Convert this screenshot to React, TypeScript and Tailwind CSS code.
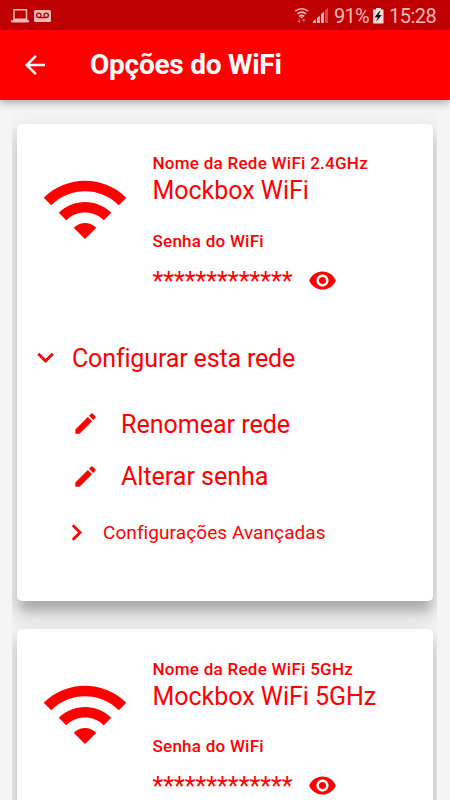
import React from "react";

type IconProps = { d: string; className: string };

function Icon({ d, className }: IconProps) {
  return (
    <svg viewBox="0 0 24 24" fill="currentColor" className={`block shrink-0 ${className}`} aria-hidden="true">
      <path d={d} />
    </svg>
  );
}

const paths = {
  back: "M20 11H7.83l5.59-5.59L12 4l-8 8 8 8 1.41-1.41L7.83 13H20v-2z",
  wifi: "M1 9l2 2c4.97-4.97 13.03-4.97 18 0l2-2C16.93 2.93 7.08 2.93 1 9zm8 8l3 3 3-3c-1.65-1.66-4.34-1.66-6 0zm-4-4l2 2c2.76-2.76 7.24-2.76 10 0l2-2C15.14 9.14 8.87 9.14 5 13z",
  eye: "M12 4.5C7 4.5 2.73 7.61 1 12c1.73 4.39 6 7.5 11 7.5s9.27-3.11 11-7.5c-1.73-4.39-6-7.5-11-7.5zM12 17c-2.76 0-5-2.24-5-5s2.24-5 5-5 5 2.24 5 5-2.24 5-5 5zm0-8c-1.66 0-3 1.34-3 3s1.34 3 3 3 3-1.34 3-3-1.34-3-3-3z",
  pencil: "M3 17.25V21h3.75L17.81 9.94l-3.75-3.75L3 17.25zM20.71 7.04c.39-.39.39-1.02 0-1.41l-2.34-2.34c-.39-.39-1.02-.39-1.41 0l-1.83 1.83 3.75 3.75 1.83-1.83z",
  down: "M7.41 8.59L12 13.17l4.59-4.58L18 10l-6 6-6-6 1.41-1.41z",
  right: "M8.59 16.59L13.17 12 8.59 7.41 10 6l6 6-6 6-1.41-1.41z",
};

function StatusBar() {
  return (
    <div className="flex h-[30px] shrink-0 items-center bg-[#be0000] text-[#f0b9b9]">
      <svg width="60" height="30" viewBox="0 0 60 30" className="block" aria-hidden="true">
        <path d="M14 9.700h12.500v9.500H14z" fill="none" stroke="currentColor" strokeWidth="1.5" />
        <path d="M11 20h18v1.400l-1 1H12l-1-1z" fill="currentColor" />
        <rect x="34" y="10" width="17" height="12" rx="1.5" fill="currentColor" />
        <g fill="none" stroke="#be0000" strokeWidth="1.3">
          <circle cx="38.800" cy="15.300" r="2.200" />
          <circle cx="46.200" cy="15.300" r="2.200" />
          <path d="M38.800 17.600h7.400" />
        </g>
      </svg>
      <svg width="42" height="30" viewBox="290 0 42 30" className="ml-[230px] block" aria-hidden="true">
        <g fill="none" stroke="currentColor" strokeWidth="1.6">
          <path d="M295.300 11.200q6.400-5 12.800 0M297.300 13.900q4.400-3.600 8.800 0M299.200 16.400q2.500-2.200 5 0" />
        </g>
        <path d="M300 16.800h3.400l-1.700 2z" fill="currentColor" />
        <path d="M299.200 18.500v3.500M297.700 20.600l1.500 1.600 1.500-1.600M303.800 22.500V19M302.300 20.600l1.500-1.600 1.500 1.600" fill="none" stroke="currentColor" strokeWidth=".9" opacity=".65" />
        <path d="M313 23v-1.600l2.900-2.400V23zM317 23v-5l2.900-2.600V23zM321 23v-8.800l2.900-2.700V23z" fill="currentColor" />
        <path d="M325 23V10.500l3-2.400V23z" fill="currentColor" opacity=".4" />
      </svg>
      <span className="ml-[2px] mt-[2px] w-[37px] whitespace-nowrap text-[20px] leading-[30px] tracking-[-0.7px]">91%</span>
      <svg width="14" height="30" viewBox="371 0 14 30" className="block" aria-hidden="true">
        <path d="M376 8h5v1.500h2.500V23.500H373V9.500h3z" fill="#f8dada" />
        <path d="M379.600 11l-5 6.200h3.200l-1.800 4.500 5.800-6.700h-3.300l2-4z" fill="#0c0c0c" />
      </svg>
      <span className="ml-[4px] mt-[2px] whitespace-nowrap text-[20px] leading-[30px] tracking-[-0.5px]">15:28</span>
    </div>
  );
}

function NetworkCard({ band, name }: { band: string; name: string }) {
  return (
    <section className="h-[477px] shrink-0 rounded-[5px] bg-white shadow-[0_13px_10px_-4px_rgba(0,0,0,0.14),0_13px_17px_2px_rgba(0,0,0,0.13),0_6px_22px_4px_rgba(0,0,0,0.08)]">
      <div className="flex h-[211px]">
        <Icon d={paths.wifi} className="ml-[22.5px] mt-[39.5px] size-[90px]" />
        <div className="ml-[23px] whitespace-nowrap pt-[29.3px]">
          <p className="text-[17px] font-medium leading-5 tracking-[0.27px]">Nome da Rede WiFi {band}</p>
          <p className="mt-px text-[25px] leading-[34px] tracking-[-0.03px]">{name}</p>
          <p className="mt-[22.7px] text-[17px] font-medium leading-5 tracking-[0.25px]">Senha do WiFi</p>
          <div className="mt-[14px] flex h-[30px] items-center">
            <span className="mt-[3px] w-[155.5px] text-[25px] leading-[27px]">*************</span>
            <Icon d={paths.eye} className="mt-px size-[29px]" />
          </div>
        </div>
      </div>
      <div className="flex h-[46px] items-center pl-[11.5px]">
        <Icon d={paths.down} className="-mt-[2px] size-[33px]" />
        <span className="ml-[10.5px] mt-px whitespace-nowrap text-[25px] leading-[34px] tracking-[-0.15px]">Configurar esta rede</span>
      </div>
      <div className="mt-[17px] flex h-[52px] items-center pl-[55px]">
        <Icon d={paths.pencil} className="-mt-px size-[27px]" />
        <span className="ml-[22px] mt-px whitespace-nowrap text-[25px] leading-[34px]">Renomear rede</span>
      </div>
      <div className="flex h-[53px] items-center pl-[55px]">
        <Icon d={paths.pencil} className="size-[27px]" />
        <span className="ml-[22px] whitespace-nowrap text-[25px] leading-[34px]">Alterar senha</span>
      </div>
      <div className="mt-[3px] flex h-[53px] items-center pl-[43px]">
        <Icon d={paths.right} className="size-[33px]" />
        <span className="ml-[10px] whitespace-nowrap text-[19px] leading-[28px] tracking-[0.08px]">Configurações Avançadas</span>
      </div>
    </section>
  );
}

export default function App() {
  return (
    <div className="flex h-[800px] w-[450px] flex-col overflow-hidden bg-[#f5f5f5] font-['Roboto',sans-serif] text-[#ff0000]">
      <StatusBar />
      <header className="z-10 flex h-[70px] shrink-0 items-center bg-[#ff0000] pl-5 text-white shadow-[0_2px_6px_rgba(0,0,0,0.2),0_4px_10px_rgba(0,0,0,0.14)]">
        <Icon d={paths.back} className="size-[30px]" />
        <h1 className="ml-[40px] text-[28px] font-bold leading-10 tracking-[-0.25px]">Opções do WiFi</h1>
      </header>
      <main className="ml-[12px] flex h-[700px] w-[425px] flex-col gap-[28.3px] overflow-hidden pl-[5px] pr-[4px] pt-[24px]">
        <NetworkCard band="2.4GHz" name="Mockbox WiFi" />
        <NetworkCard band="5GHz" name="Mockbox WiFi 5GHz" />
      </main>
    </div>
  );
}
